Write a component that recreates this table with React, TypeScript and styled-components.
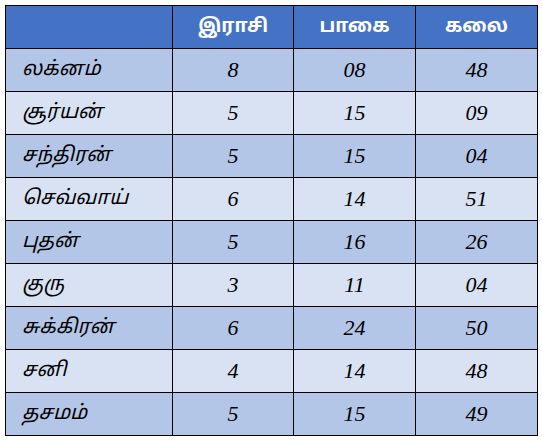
import React from "react";
import styled, { createGlobalStyle } from "styled-components";

const GlobalStyle = createGlobalStyle`
  body {
    margin: 0;
    background: #ffffff;
    font-family: "Liberation Serif", "Noto Sans Tamil", serif;
  }
`;

const Page = styled.div`
  padding: 5px 0 0 5px;
`;

const Table = styled.table`
  border-collapse: collapse;
  table-layout: fixed;
  width: 532px;
`;

const HeadCell = styled.th`
  height: 42px;
  padding: 0;
  border: 1px solid #000;
  background: #4472c4;
  color: #ffffff;
  font-family: "Noto Sans Tamil", "Latha", "Noto Sans", sans-serif;
  font-size: 19px;
  font-weight: bold;
  text-align: center;
  vertical-align: middle;
`;

const Row = styled.tr<{ $odd: boolean }>`
  background: ${(p) => (p.$odd ? "#b4c6e7" : "#d9e2f3")};
`;

const NameCell = styled.td`
  height: 42px;
  padding: 0 0 0 16px;
  border: 1px solid #000;
  font-family: "Noto Sans Tamil", "Latha", "Noto Sans", sans-serif;
  font-size: 20px;
  font-style: italic;
  color: #000;
  vertical-align: middle;
`;

const NumCell = styled.td`
  height: 42px;
  padding: 0;
  border: 1px solid #000;
  font-family: "Liberation Serif", "Times New Roman", serif;
  font-size: 22px;
  font-style: italic;
  color: #000;
  text-align: center;
  vertical-align: middle;
`;

const rows: [string, string, string, string][] = [
  ["லக்னம்", "8", "08", "48"],
  ["சூர்யன்", "5", "15", "09"],
  ["சந்திரன்", "5", "15", "04"],
  ["செவ்வாய்", "6", "14", "51"],
  ["புதன்", "5", "16", "26"],
  ["குரு", "3", "11", "04"],
  ["சுக்கிரன்", "6", "24", "50"],
  ["சனி", "4", "14", "48"],
  ["தசமம்", "5", "15", "49"],
];

export default function App() {
  return (
    <>
      <GlobalStyle />
      <Page>
        <Table>
          <colgroup>
            <col style={{ width: 167 }} />
            <col style={{ width: 121 }} />
            <col style={{ width: 122 }} />
            <col style={{ width: 122 }} />
          </colgroup>
          <thead>
            <tr>
              <HeadCell />
              <HeadCell>இராசி</HeadCell>
              <HeadCell>பாகை</HeadCell>
              <HeadCell>கலை</HeadCell>
            </tr>
          </thead>
          <tbody>
            {rows.map(([name, rasi, degree, minute], i) => (
              <Row key={name} $odd={i % 2 === 0}>
                <NameCell>{name}</NameCell>
                <NumCell>{rasi}</NumCell>
                <NumCell>{degree}</NumCell>
                <NumCell>{minute}</NumCell>
              </Row>
            ))}
          </tbody>
        </Table>
      </Page>
    </>
  );
}
